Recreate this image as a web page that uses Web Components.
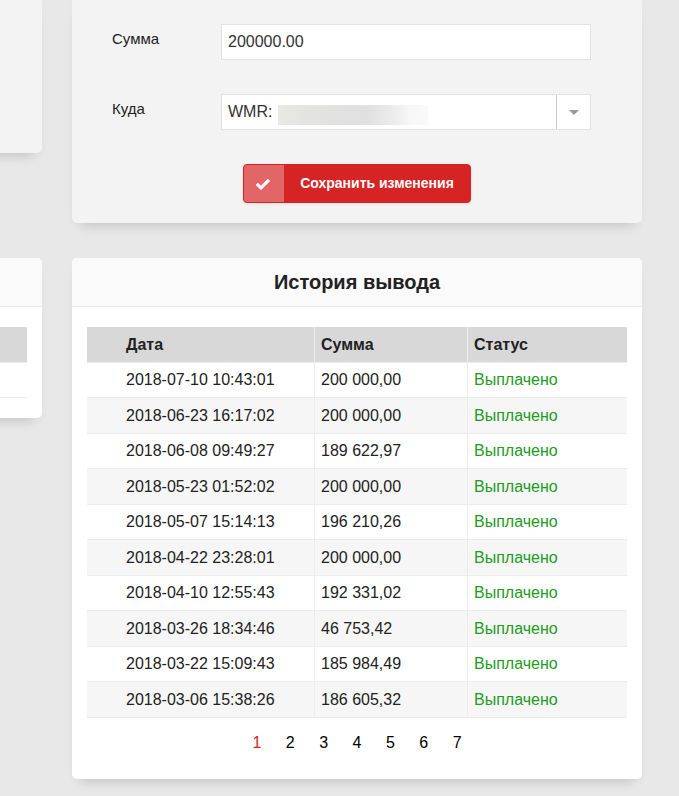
<!DOCTYPE html>
<html lang="ru">
<head>
<meta charset="utf-8">
<meta name="viewport" content="width=device-width, initial-scale=1">
<title>История вывода</title>
<style>
body {
  margin: 0;
  background-color: #e8e8e8;
  color: #222;
  font: 16px/22px "Liberation Sans", Arial, sans-serif;
}

main {
  display: grid;
  grid-template-columns: 42px minmax(0, 1fr);
  gap: 35px 30px;
  align-items: start;
  padding: 0 37px 17px 0;
}

.settings {
  min-height: 153px;
}

.form {
  display: grid;
  gap: 34px;
  padding: 24px 51px 34px 40px;
}

.actions {
  display: flex;
  justify-content: center;
  padding-bottom: 20px;
}
</style>
</head>
<body>
<main>
  <panel-card class="settings" edge top plain></panel-card>
  <panel-card top plain>
    <div class="form">
      <text-field label="Сумма" value="200000.00"></text-field>
      <select-field label="Куда" value="WMR:"></select-field>
    </div>
    <div class="actions">
      <save-button>Сохранить изменения</save-button>
    </div>
  </panel-card>
  <panel-card edge>
    <data-table empty></data-table>
  </panel-card>
  <panel-card>
    <span slot="title">История вывода</span>
    <data-table></data-table>
    <page-nav pages="7" current="1"></page-nav>
  </panel-card>
</main>

<script>
/**
 * Creates a template out of styles and markup.
 */
function createTemplate (html) {
  const template = document.createElement('template')
  template.innerHTML = html
  return template
}

const cardTemplate = createTemplate(`
<style>
:host {
  display: block;
  box-sizing: border-box;
  background-color: #fff;
  border-radius: 5px;
  box-shadow: 0 10px 12px -8px rgba(0, 0, 0, 0.16), 0 2px 12px rgba(0, 0, 0, 0.02);
}

:host([plain]) {
  background-color: #f3f3f3;
}

/* Cards that continue past the window */
:host([top]) {
  border-top-left-radius: 0;
  border-top-right-radius: 0;
}

:host([edge]) {
  margin-left: -30px;
}

h2 {
  box-sizing: border-box;
  height: 49px;
  margin: 0;
  padding: 12px 15px;
  border-bottom: 1px solid #e8e8e8;
  border-top-left-radius: 5px;
  border-top-right-radius: 5px;
  background-color: #fafafa;
  font-size: 20px;
  line-height: 24px;
  text-align: center;
}

.body {
  padding: 20px 15px;
}

:host([plain]) h2 {
  display: none;
}

:host([plain]) .body {
  padding: 0;
}
</style>
<h2><slot name="title"></slot></h2>
<div class="body"><slot></slot></div>`)

class PanelCard extends HTMLElement {
  constructor () {
    super()
    this.attachShadow({ mode: 'open' })
    this.shadowRoot.appendChild(document.importNode(cardTemplate.content, true))
  }
}

const fieldStyle = `
:host {
  display: grid;
  grid-template-columns: 109px minmax(0, 1fr);
  align-items: start;
}

label {
  padding-top: 6px;
  font-size: 15px;
  line-height: 18px;
}

input, select {
  display: block;
  box-sizing: border-box;
  width: 100%;
  height: 36px;
  margin: 0;
  padding: 0 6px;
  border: 1px solid #e2e2e2;
  border-radius: 0;
  background-color: #fff;
  color: #333;
  font: inherit;
  appearance: none;
}`

const textTemplate = createTemplate(`
<style>${fieldStyle}</style>
<label for="field"></label>
<input id="field" type="text">`)

class TextField extends HTMLElement {
  constructor () {
    super()
    this.attachShadow({ mode: 'open' })
    this.shadowRoot.appendChild(document.importNode(textTemplate.content, true))
  }

  connectedCallback () {
    this.shadowRoot.querySelector('label').textContent = this.getAttribute('label')
    this.shadowRoot.querySelector('input').value = this.getAttribute('value')
  }
}

const selectTemplate = createTemplate(`
<style>
${fieldStyle}

.box {
  position: relative;
}

/* Blurred wallet number */
.mask {
  position: absolute;
  left: 57px;
  top: 11px;
  width: 150px;
  height: 20px;
  background: linear-gradient(90deg, #e9e9e2, #e3e3e2 20%, #e0e0e0 60%, #ededed 78%, #f7f7f7 88%, #fafafa);
  pointer-events: none;
}

.arrow {
  position: absolute;
  right: 1px;
  top: 1px;
  bottom: 1px;
  width: 33px;
  display: flex;
  align-items: center;
  justify-content: center;
  border-left: 1px solid #c8c8c8;
  pointer-events: none;
}
</style>
<label for="field"></label>
<div class="box">
  <select id="field"><option></option></select>
  <span class="mask"></span>
  <span class="arrow"><svg width="10" height="5" viewBox="0 0 10 5"><path d="M0 0h10L5 5z" fill="#999"/></svg></span>
</div>`)

class SelectField extends HTMLElement {
  constructor () {
    super()
    this.attachShadow({ mode: 'open' })
    this.shadowRoot.appendChild(document.importNode(selectTemplate.content, true))
  }

  connectedCallback () {
    this.shadowRoot.querySelector('label').textContent = this.getAttribute('label')
    this.shadowRoot.querySelector('option').textContent = this.getAttribute('value')
  }
}

const buttonTemplate = createTemplate(`
<style>
:host {
  display: inline-block;
}

button {
  display: flex;
  align-items: stretch;
  height: 39px;
  padding: 0;
  overflow: hidden;
  border: 1px solid #d62424;
  border-radius: 4px;
  background-color: #d62424;
  box-shadow: 0 1px 3px rgba(0, 0, 0, 0.1);
  color: #fff;
  font: bold 14px/37px "Liberation Sans", Arial, sans-serif;
  cursor: pointer;
}

.icon {
  display: flex;
  align-items: center;
  justify-content: center;
  width: 40px;
  background-color: #e26666;
}

.icon svg {
  margin-right: 2px;
}

.text {
  padding: 0 16px;
}
</style>
<button type="button">
  <span class="icon"><svg width="16" height="12" viewBox="0 0 16 12"><path d="M1.8 5.8L6 9.8L14 1.8" fill="none" stroke="#fff" stroke-width="3.2"/></svg></span>
  <span class="text"><slot></slot></span>
</button>`)

class SaveButton extends HTMLElement {
  constructor () {
    super()
    this.attachShadow({ mode: 'open' })
    this.shadowRoot.appendChild(document.importNode(buttonTemplate.content, true))
  }
}

const payouts = [
  ['2018-07-10 10:43:01', '200 000,00'],
  ['2018-06-23 16:17:02', '200 000,00'],
  ['2018-06-08 09:49:27', '189 622,97'],
  ['2018-05-23 01:52:02', '200 000,00'],
  ['2018-05-07 15:14:13', '196 210,26'],
  ['2018-04-22 23:28:01', '200 000,00'],
  ['2018-04-10 12:55:43', '192 331,02'],
  ['2018-03-26 18:34:46', '46 753,42'],
  ['2018-03-22 15:09:43', '185 984,49'],
  ['2018-03-06 15:38:26', '186 605,32']
]

const tableTemplate = createTemplate(`
<style>
:host {
  display: block;
}

table {
  width: 100%;
  table-layout: fixed;
  border-collapse: separate;
  border-spacing: 0;
}

th, td {
  box-sizing: border-box;
  height: 35px;
  padding: 0 6px;
  border-right: 1px solid #ececec;
  border-bottom: 1px solid #ececec;
  text-align: left;
}

th {
  height: 36px;
  background-color: #d8d8d8;
}

tr:nth-child(even) td {
  height: 36px;
  background-color: #f6f6f6;
}

th:first-child, td:first-child {
  width: 228px;
  padding-left: 39px;
}

th:nth-child(2), td:nth-child(2) {
  width: 153px;
}

th:last-child, td:last-child {
  border-right: 0;
}

:host([empty]) th, :host([empty]) td {
  width: auto;
  padding: 0;
}

.paid {
  color: #239b23;
}
</style>
<table>
  <thead></thead>
  <tbody></tbody>
</table>`)

class DataTable extends HTMLElement {
  constructor () {
    super()
    this.attachShadow({ mode: 'open' })
    this.shadowRoot.appendChild(document.importNode(tableTemplate.content, true))
  }

  connectedCallback () {
    const head = this.shadowRoot.querySelector('thead')
    const body = this.shadowRoot.querySelector('tbody')
    if (this.hasAttribute('empty')) {
      head.innerHTML = '<tr><th></th></tr>'
      body.innerHTML = '<tr><td></td></tr>'
      return
    }
    head.innerHTML = '<tr><th>Дата</th><th>Сумма</th><th>Статус</th></tr>'
    body.innerHTML = payouts.map(([date, sum]) =>
      '<tr><td>' + date + '</td><td>' + sum + '</td><td class="paid">Выплачено</td></tr>'
    ).join('')
  }
}

const navTemplate = createTemplate(`
<style>
:host {
  display: block;
  padding: 15px 0 6px;
  line-height: 20px;
  text-align: center;
}

a {
  padding: 0 10px;
  color: #000;
  text-decoration: none;
}

a.current {
  color: #d62424;
}
</style>
<nav></nav>`)

class PageNav extends HTMLElement {
  constructor () {
    super()
    this.attachShadow({ mode: 'open' })
    this.shadowRoot.appendChild(document.importNode(navTemplate.content, true))
  }

  connectedCallback () {
    const links = []
    for (let i = 1; i <= Number(this.getAttribute('pages')); i++) {
      const active = i === Number(this.getAttribute('current')) ? ' class="current"' : ''
      links.push('<a href="#' + i + '"' + active + '>' + i + '</a>')
    }
    this.shadowRoot.querySelector('nav').innerHTML = links.join(' ')
  }
}

window.customElements.define('panel-card', PanelCard)
window.customElements.define('text-field', TextField)
window.customElements.define('select-field', SelectField)
window.customElements.define('save-button', SaveButton)
window.customElements.define('data-table', DataTable)
window.customElements.define('page-nav', PageNav)
</script>
</body>
</html>
